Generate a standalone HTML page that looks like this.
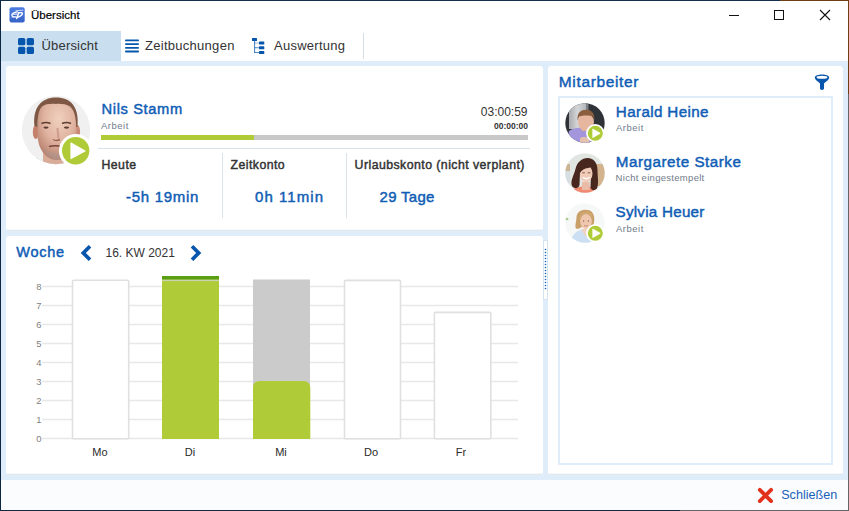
<!DOCTYPE html>
<html><head><meta charset="utf-8">
<style>
*{margin:0;padding:0;box-sizing:border-box}
html,body{width:849px;height:511px;overflow:hidden;background:#fff}
body{position:relative;font-family:"Liberation Sans",sans-serif}
.a{position:absolute}
.t{position:absolute;white-space:nowrap;line-height:1}
.blue{color:#0f5db5}
.b{font-weight:bold}
.sb{font-weight:normal;-webkit-text-stroke:0.45px currentColor}
.panel{position:absolute;background:linear-gradient(180deg,#fff calc(100% - 2px),#f6f8fa calc(100% - 2px),#f6f8fa calc(100% - 1px),#e0e7ed calc(100% - 1px));
 clip-path:polygon(2px 0,calc(100% - 2px) 0,100% 2px,100% calc(100% - 2px),calc(100% - 2px) 100%,2px 100%,0 calc(100% - 2px),0 2px)}
</style></head><body>

<!-- window border -->
<div class="a" style="left:0;top:0;width:849px;height:1px;background:linear-gradient(90deg,#13304d 0,#13304d 780px,#6f3f14 780px)"></div>
<div class="a" style="left:0;top:0;width:1px;height:511px;background:#0d2742"></div>
<div class="a" style="left:848px;top:0;width:1px;height:511px;background:linear-gradient(180deg,#6f3f14 0,#6f3f14 94px,#656565 94px,#656565 511px)"></div>
<div class="a" style="left:0;top:510px;width:849px;height:1px;background:linear-gradient(90deg,#0f2a44 0,#0f2a44 680px,#656565 680px)"></div>

<!-- title bar -->
<svg class="a" style="left:9px;top:7px" width="16" height="16" viewBox="9 7 16 16">
 <defs><linearGradient id="lg" x1="0" y1="0" x2="0" y2="1"><stop offset="0" stop-color="#4d7de0"/><stop offset="1" stop-color="#3562c6"/></linearGradient></defs>
 <rect x="9.5" y="7.2" width="15.2" height="15.3" rx="2" fill="url(#lg)"/>
 <g fill="none" stroke="#fff" stroke-linecap="round">
  <path d="M17.4 11.9 C14.5 12.3 12.2 13.6 11.9 15 C11.6 16.4 13.2 17 15.8 16.9" stroke-width="1.4"/>
  <path d="M13.6 14.3 L17 14" stroke-width="1.1"/>
  <path d="M16 10.7 L22.9 10.2" stroke-width="0.7"/>
  <path d="M18.7 13 L16.6 18.6" stroke-width="1.5"/>
  <path d="M18.6 12.8 C21 12.4 22.8 12.6 22.4 13.8 C22 15.2 20 16.6 17.4 17.2" stroke-width="1.4"/>
  <path d="M11.3 17.5 L15 17.3" stroke-width="0.5" opacity="0.6"/>
 </g>
</svg>
<div class="t" style="left:31px;top:10.2px;font-size:11.5px;color:#000;-webkit-text-stroke:0.2px #000">Übersicht</div>

<svg class="a" style="left:728px;top:14px" width="12" height="2"><rect x="1" y="1" width="10" height="1" fill="#111"/></svg>
<div class="a" style="left:774px;top:10px;width:10px;height:10px;border:1px solid #111"></div>
<svg class="a" style="left:819px;top:9px" width="12" height="12" viewBox="0 0 12 12"><path d="M1 1 L11 11 M11 1 L1 11" stroke="#111" stroke-width="1.1"/></svg>

<!-- tab bar -->
<div class="a" style="left:1px;top:31px;width:120px;height:30px;background:#c9deee"></div>
<svg class="a" style="left:18px;top:38px" width="16" height="16" viewBox="0 0 16 16">
 <rect x="0" y="0" width="7.3" height="7.3" rx="1.6" fill="#0656ad"/>
 <rect x="8.7" y="0" width="7.3" height="7.3" rx="1.6" fill="#0656ad"/>
 <rect x="0" y="8.7" width="7.3" height="7.3" rx="1.6" fill="#0656ad"/>
 <rect x="8.7" y="8.7" width="7.3" height="7.3" rx="1.6" fill="#0656ad"/>
</svg>
<div class="t" style="left:41.5px;top:38.6px;font-size:13px;color:#333;letter-spacing:0.18px">Übersicht</div>

<svg class="a" style="left:124.6px;top:39px" width="14" height="14" viewBox="0 0 14 14">
 <rect x="0" y="0.5" width="14" height="1.8" rx="0.9" fill="#0656ad"/>
 <rect x="0" y="4.2" width="14" height="1.8" rx="0.9" fill="#0656ad"/>
 <rect x="0" y="7.9" width="14" height="1.8" rx="0.9" fill="#0656ad"/>
 <rect x="0" y="11.6" width="14" height="1.8" rx="0.9" fill="#0656ad"/>
</svg>
<div class="t" style="left:145px;top:38.6px;font-size:13px;color:#333;letter-spacing:0.28px">Zeitbuchungen</div>

<svg class="a" style="left:248px;top:35px" width="20" height="22" viewBox="0 0 20 22">
 <g fill="#0656ad">
 <rect x="4" y="3" width="5" height="2.9" rx="0.5"/>
 <rect x="6.1" y="5.5" width="1" height="12.3" opacity="0.75"/>
 <rect x="6.1" y="7.6" width="5" height="0.9" opacity="0.45"/>
 <rect x="6.1" y="12.3" width="5" height="0.9" opacity="0.75"/>
 <rect x="6.1" y="17" width="5" height="0.9" opacity="0.75"/>
 <rect x="11" y="6.5" width="5.3" height="3" rx="0.6"/>
 <rect x="11" y="11.3" width="5.3" height="3" rx="0.6"/>
 <rect x="11" y="16.1" width="5.3" height="2.9" rx="0.6"/>
 </g>
</svg>
<div class="t" style="left:274px;top:38.6px;font-size:13px;color:#333;letter-spacing:0.26px">Auswertung</div>
<div class="a" style="left:363px;top:33px;width:1px;height:26px;background:#d5dde5"></div>

<!-- content background -->
<div class="a" style="left:1px;top:61px;width:847px;height:419px;background:#dfecf9"></div>
<div class="a" style="left:1px;top:480px;width:847px;height:30px;background:#fafcfe"></div>

<!-- panel 1 -->
<div class="panel" style="left:6px;top:66px;width:537px;height:165px"></div>
<!-- panel 2 -->
<div class="panel" style="left:6px;top:236px;width:537px;height:239px"></div>
<!-- panel 3 -->
<div class="panel" style="left:548px;top:66px;width:295px;height:409px"></div>

<!-- splitter -->
<div class="a" style="left:543px;top:240px;width:5px;height:60px;background:#fff;border:1px solid #d5e3f0"></div>
<svg class="a" style="left:544px;top:248px" width="3" height="42">
 <g fill="#1a62b8">
 <circle cx="1.5" cy="1.5" r="0.8"/><circle cx="1.5" cy="4.5" r="0.8"/><circle cx="1.5" cy="7.5" r="0.8"/><circle cx="1.5" cy="10.5" r="0.8"/>
 <circle cx="1.5" cy="13.5" r="0.8"/><circle cx="1.5" cy="16.5" r="0.8"/><circle cx="1.5" cy="19.5" r="0.8"/><circle cx="1.5" cy="22.5" r="0.8"/>
 <circle cx="1.5" cy="25.5" r="0.8"/><circle cx="1.5" cy="28.5" r="0.8"/><circle cx="1.5" cy="31.5" r="0.8"/><circle cx="1.5" cy="34.5" r="0.8"/>
 <circle cx="1.5" cy="37.5" r="0.8"/><circle cx="1.5" cy="40.5" r="0.8"/>
 </g>
</svg>

<!-- ===== Employee card ===== -->
<svg class="a" style="left:20px;top:94px" width="74" height="74" viewBox="20 94 74 74">
 <defs>
  <clipPath id="c1"><circle cx="56" cy="130" r="34.2"/></clipPath>
  <radialGradient id="skin1" cx="0.55" cy="0.3" r="0.7"><stop offset="0" stop-color="#f0d0bf"/><stop offset="0.55" stop-color="#e0b4a0"/><stop offset="1" stop-color="#b98270"/></radialGradient>
 </defs>
 <g clip-path="url(#c1)">
  <rect x="20" y="94" width="74" height="74" fill="#f0f0f0"/>
  <path d="M26 168 C30 161 38 159 44 158 L68 158 C74 159 82 161 86 168 Z" fill="#e8eef2"/>
  <path d="M32 166 L37 158 L41 166 Z" fill="#4a9ac8"/>
  <path d="M43 148 L43 168 L70 168 L70 148 Z" fill="#d8ac98"/>
  <ellipse cx="35.8" cy="132" rx="3" ry="7" fill="#c4806a"/>
  <ellipse cx="77.3" cy="132" rx="2.8" ry="7" fill="#c88a74"/>
  <path d="M37.5 116 C37.5 105 45 101.5 57 101.5 C69 101.5 76.5 105 76.5 117 L76.5 134 C76.5 149 68 160 57 160 C46 160 37.5 149 37.5 134 Z" fill="url(#skin1)"/>
  <path d="M43 148 C47 156 52 160 57 160 C62 160 67 156 70 148 C66 152 62 153 57 153 C52 153 47 152 43 148 Z" fill="#a89890" opacity="0.5"/>
  <path d="M34.5 126 C32.5 108 41 97.5 56 97.5 C71 97.5 79.5 107 77.5 127 L76.2 127 C76 116 74 110 70 106.5 C66 104 60 103.5 56 104 C51 103.5 45 104 42 106.5 C38.5 110 37.5 117 37.6 127 Z" fill="#7e5844"/>
  <path d="M41.5 123.5 Q46 121.5 50.5 123.5 M62 123.5 Q66.5 121.5 71 123.5" stroke="#5e3e30" stroke-width="1.6" fill="none"/>
  <ellipse cx="46" cy="127.6" rx="2.6" ry="1.1" fill="#5a3e34"/>
  <ellipse cx="66.5" cy="127.6" rx="2.6" ry="1.1" fill="#5a3e34"/>
  <path d="M57.5 128 L58.5 138.5" stroke="#c89080" stroke-width="2.2" fill="none" opacity="0.7"/>
  <path d="M53 139.5 Q56 141.5 60 139.5" stroke="#9a6050" stroke-width="1.4" fill="none"/>
  <path d="M49 146.5 Q55 145 62 146.5" stroke="#7a4438" stroke-width="1.7" fill="none"/>
 </g>
</svg>
<svg class="a" style="left:58px;top:134px" width="35" height="35" viewBox="58 134 35 35">
 <circle cx="75.7" cy="150.8" r="16.8" fill="#fff"/>
 <circle cx="75.7" cy="150.8" r="13.7" fill="#afcb37"/>
 <path d="M71 143 L85 151 L71 158.5 Z" fill="#fff" stroke="#fff" stroke-width="1.2" stroke-linejoin="round"/>
</svg>

<div class="t sb blue" style="left:101.6px;top:101.9px;font-size:14.7px;letter-spacing:0.61px">Nils Stamm</div>
<div class="t" style="left:101px;top:120.6px;font-size:9.5px;color:#717b8a;letter-spacing:0.5px">Arbeit</div>
<div class="t" style="right:321.5px;top:106.2px;font-size:12px;color:#333">03:00:59</div>
<div class="t b" style="right:321px;top:121.6px;font-size:8.5px;color:#333">00:00:00</div>

<div class="a" style="left:101px;top:135px;width:153px;height:5px;background:#afcb37"></div>
<div class="a" style="left:254px;top:135px;width:274px;height:5px;background:#c8c8c8"></div>
<div class="a" style="left:98px;top:148px;width:432px;height:1px;background:#d8e3eb"></div>
<div class="a" style="left:222px;top:153px;width:1px;height:65px;background:#d8e3eb"></div>
<div class="a" style="left:346px;top:153px;width:1px;height:65px;background:#d8e3eb"></div>

<div class="t sb" style="left:101.5px;top:159.2px;font-size:12.3px;color:#333;letter-spacing:0.45px">Heute</div>
<div class="t sb" style="left:230.6px;top:159.2px;font-size:12.3px;color:#333;letter-spacing:0.43px">Zeitkonto</div>
<div class="t sb" style="left:354.6px;top:159.2px;font-size:12.3px;color:#333;letter-spacing:0.45px">Urlaubskonto (nicht verplant)</div>

<div class="t sb blue" style="left:126px;top:189px;font-size:15px;letter-spacing:0.7px">-5h 19min</div>
<div class="t sb blue" style="left:255px;top:189px;font-size:15px;letter-spacing:1.06px">0h 11min</div>
<div class="t sb blue" style="left:379.5px;top:189px;font-size:15px;letter-spacing:0.3px">29 Tage</div>

<!-- ===== Woche ===== -->
<div class="t sb blue" style="left:16.3px;top:244.9px;font-size:14.5px;letter-spacing:0.72px">Woche</div>
<svg class="a" style="left:80px;top:245px" width="12" height="16" viewBox="0 0 12 16"><path d="M10 1.3 L3.3 8 L10 14.7" stroke="#0656ad" stroke-width="3.7" fill="none" stroke-linecap="butt" stroke-linejoin="miter"/></svg>
<div class="t" style="left:105.5px;top:247px;font-size:12px;color:#333">16. KW 2021</div>
<svg class="a" style="left:190px;top:245px" width="12" height="16" viewBox="0 0 12 16"><path d="M2 1.3 L8.7 8 L2 14.7" stroke="#0656ad" stroke-width="3.7" fill="none" stroke-linecap="butt" stroke-linejoin="miter"/></svg>

<!-- chart -->
<svg class="a" style="left:0;top:0" width="849" height="511">
 <g stroke="#e8e8e8" stroke-width="1.5">
  <line x1="42" y1="286.45" x2="518" y2="286.45"/>
  <line x1="42" y1="305.45" x2="518" y2="305.45"/>
  <line x1="42" y1="324.45" x2="518" y2="324.45"/>
  <line x1="42" y1="343.45" x2="518" y2="343.45"/>
  <line x1="42" y1="362.45" x2="518" y2="362.45"/>
  <line x1="42" y1="381.45" x2="518" y2="381.45"/>
  <line x1="42" y1="400.45" x2="518" y2="400.45"/>
  <line x1="42" y1="419.45" x2="518" y2="419.45"/>
  <line x1="42" y1="438.45" x2="518" y2="438.45"/>
 </g>
 <!-- Mo -->
 <rect x="72.5" y="280.2" width="56.2" height="158.5" rx="1" fill="#fff" stroke="#e0e0e0" stroke-width="1.6"/>
 <!-- Di -->
 <rect x="162" y="276" width="57" height="163" fill="#afcb37"/>
 <rect x="162" y="276" width="57" height="3.7" fill="#5a9e12"/>
 <rect x="162" y="279.7" width="57" height="1.4" fill="#c9d4b0"/>
 <!-- Mi -->
 <rect x="253" y="279.5" width="57" height="159.5" fill="#cbcbcb"/>
 <path d="M253 439 V388 Q253 381 260 381 H303.3 Q310.3 381 310.3 388 V439 Z" fill="#afcb37"/>
 <!-- Do -->
 <rect x="344.5" y="280.4" width="56" height="158.3" rx="1" fill="#fff" stroke="#e0e0e0" stroke-width="1.6"/>
 <!-- Fr -->
 <rect x="434.4" y="312.4" width="56.4" height="126.3" rx="1" fill="#fff" stroke="#e0e0e0" stroke-width="1.6"/>
</svg>
<div class="t" style="left:30px;top:281.9px;width:11.5px;text-align:right;font-size:9.4px;color:#808080">8</div>
<div class="t" style="left:30px;top:300.9px;width:11.5px;text-align:right;font-size:9.4px;color:#808080">7</div>
<div class="t" style="left:30px;top:319.9px;width:11.5px;text-align:right;font-size:9.4px;color:#808080">6</div>
<div class="t" style="left:30px;top:338.9px;width:11.5px;text-align:right;font-size:9.4px;color:#808080">5</div>
<div class="t" style="left:30px;top:357.9px;width:11.5px;text-align:right;font-size:9.4px;color:#808080">4</div>
<div class="t" style="left:30px;top:376.9px;width:11.5px;text-align:right;font-size:9.4px;color:#808080">3</div>
<div class="t" style="left:30px;top:395.9px;width:11.5px;text-align:right;font-size:9.4px;color:#808080">2</div>
<div class="t" style="left:30px;top:414.9px;width:11.5px;text-align:right;font-size:9.4px;color:#808080">1</div>
<div class="t" style="left:30px;top:433.9px;width:11.5px;text-align:right;font-size:9.4px;color:#808080">0</div>

<div class="t" style="left:70px;top:446.9px;width:60px;text-align:center;font-size:11px;color:#2a2a2a">Mo</div>
<div class="t" style="left:160px;top:446.9px;width:60px;text-align:center;font-size:11px;color:#2a2a2a">Di</div>
<div class="t" style="left:251px;top:446.9px;width:60px;text-align:center;font-size:11px;color:#2a2a2a">Mi</div>
<div class="t" style="left:341px;top:446.9px;width:60px;text-align:center;font-size:11px;color:#2a2a2a">Do</div>
<div class="t" style="left:431px;top:446.9px;width:60px;text-align:center;font-size:11px;color:#2a2a2a">Fr</div>

<!-- ===== Mitarbeiter ===== -->
<div class="t sb blue" style="left:558.8px;top:73.7px;font-size:15.5px;letter-spacing:0.64px">Mitarbeiter</div>
<svg class="a" style="left:814px;top:73px" width="16" height="18" viewBox="0 0 16 18">
 <path d="M0.8 4.6 C0.8 0.6 15.2 0.6 15.2 4.6 C15.2 6.6 12.5 8.3 10 10.6 L10 15.6 Q10 17 8 17 Q6 17 6 15.6 L6 10.6 C3.5 8.3 0.8 6.6 0.8 4.6 Z" fill="#0656ad"/>
 <ellipse cx="8" cy="4.2" rx="5.4" ry="1.5" fill="#fff"/>
</svg>
<div class="a" style="left:558px;top:96px;width:275px;height:369px;border:2px solid #dfecf9"></div>

<!-- Harald -->
<svg class="a" style="left:565px;top:103px" width="40" height="40" viewBox="0 0 40 40">
 <defs><clipPath id="c2"><circle cx="20" cy="20" r="19.7"/></clipPath>
 <linearGradient id="hg" x1="0" y1="0" x2="1" y2="0"><stop offset="0" stop-color="#a8abae"/><stop offset="0.5" stop-color="#d4d6d7"/><stop offset="1" stop-color="#b4b7b9"/></linearGradient></defs>
 <g clip-path="url(#c2)">
  <rect width="40" height="40" fill="#2f3338"/>
  <rect x="4" y="0" width="17" height="26" fill="url(#hg)"/>
  <rect x="21" y="0" width="2.5" height="26" fill="#7d8186"/>
  <path d="M2 40 L4 28 C8 25 13 24.5 18 25 L25 27 L26 40 Z" fill="#a496dc"/>
  <circle cx="18" cy="19" r="0.8" fill="#7a5a50"/><circle cx="24" cy="19" r="0.8" fill="#7a5a50"/>
  <path d="M18.5 23.5 Q21 25 23.5 23.5" stroke="#b07060" stroke-width="0.9" fill="none"/>
  <rect x="16.5" y="23" width="8" height="5" fill="#d9a98f"/>
  <ellipse cx="21" cy="19" rx="8" ry="8.8" fill="#e6b69e"/>
  <path d="M12.6 17.5 C12 10 15.5 6.8 21 6.8 C26.5 6.8 30 10 29.3 17.5 L28 13.5 C25.5 12 17 12 14 13.5 Z" fill="#8a5e3e"/>
  <path d="M15 35 C17 33.5 21 33.5 24 35 L24 40 L15 40 Z" fill="#e4c0ae"/>
 </g>
</svg>
<svg class="a" style="left:585px;top:123px" width="21" height="21" viewBox="0 0 21 21">
 <circle cx="10.3" cy="10.3" r="9.2" fill="#fff"/>
 <circle cx="10.3" cy="10.3" r="7.5" fill="#afcb37"/>
 <path d="M7.8 6 L15.2 10.3 L7.8 14.6 Z" fill="#fff" stroke="#fff" stroke-width="0.8" stroke-linejoin="round"/>
</svg>
<div class="t sb blue" style="left:615.8px;top:103.7px;font-size:15.2px;letter-spacing:0.37px">Harald Heine</div>
<div class="t" style="left:616px;top:123.3px;font-size:9.5px;color:#717b8a;letter-spacing:0.5px">Arbeit</div>

<!-- Margarete -->
<svg class="a" style="left:565px;top:153px" width="40" height="40" viewBox="0 0 40 40">
 <defs><clipPath id="c3"><circle cx="20" cy="20" r="19.7"/></clipPath></defs>
 <g clip-path="url(#c3)">
  <rect width="40" height="40" fill="#e2e6e2"/>
  <rect x="29" y="11" width="11" height="22" fill="#d4b48e"/>
  <rect x="0" y="11" width="5" height="7" fill="#ccb492"/>
  <rect x="0" y="18" width="5" height="12" fill="#d6dee2"/>
  <path d="M5 40 C8 35 13 33.5 20 33.5 C27 33.5 32 35 35 40 Z" fill="#f08a72"/>
  <path d="M17 29 L17 37 L24.5 37 L24.5 29 Z" fill="#eabca8"/>
  <path d="M7 33 C5 28 9 22 10.5 16 C12 9 17 5 22.5 5 C29 5 32.5 10 32.5 17 C32.5 24 34 30 32 35.5 C30 38.5 25 37.5 25.5 33 L26 22 L15 20 L14.5 32 C13.5 36 9 36 7 33 Z" fill="#47271e"/>
  <ellipse cx="21.2" cy="20.5" rx="6.3" ry="8.6" fill="#f0cbb8"/>
  <path d="M14.2 18 C14.5 11 22 7.5 28.5 12 C27 15 24 14.5 20.5 15.5 C17.5 16.5 15.5 18.5 14.5 21 Z" fill="#47271e"/>
  <path d="M17.8 24.3 Q21.2 27 24.6 24.3" stroke="#fff" stroke-width="1.4" fill="none"/>
  <path d="M17.3 19.8 L19.8 19.8 M22.8 19.8 L25.3 19.8" stroke="#7a4a3a" stroke-width="0.9"/>
 </g>
</svg>
<div class="t sb blue" style="left:615.8px;top:153.7px;font-size:15.2px;letter-spacing:0.52px">Margarete Starke</div>
<div class="t" style="left:615.6px;top:173px;font-size:9.5px;color:#717b8a;letter-spacing:0.29px">Nicht eingestempelt</div>

<!-- Sylvia -->
<svg class="a" style="left:565px;top:203px" width="40" height="40" viewBox="0 0 40 40">
 <defs><clipPath id="c4"><circle cx="20" cy="20" r="19.7"/></clipPath></defs>
 <g clip-path="url(#c4)">
  <rect width="40" height="40" fill="#f6f8f7"/>
  <ellipse cx="1.5" cy="16" rx="2" ry="1.2" fill="#a8c890"/>
  <path d="M5 40 C7 31 12 27 19 26.5 C26 27 31 30 34 40 Z" fill="#cddff2"/>
  <path d="M16 26 L21 34 L25 26 Z" fill="#f0d2c0"/>
  <path d="M11 25.5 C9.5 23 11.5 18 11.5 14 C12 9 15.5 6.8 20.8 6.8 C26 6.8 29.3 10 29.3 16 C29.3 20 28.5 23 27 25 L24 25 L17 24 C15 25 13 26.5 11 25.5 Z" fill="#c9a06a"/>
  <ellipse cx="21" cy="18.5" rx="5.8" ry="7.4" fill="#efc6ae"/>
  <path d="M15 16 C15.5 11 24 9 27 14 L27 11.5 C25 8.5 17 8.5 15 12.5 Z" fill="#d0aa72"/>
  <circle cx="18.6" cy="18" r="0.7" fill="#8a6a5a"/><circle cx="23.4" cy="18" r="0.7" fill="#8a6a5a"/>
  <path d="M19 22.5 Q21 23.8 23 22.5" stroke="#c08070" stroke-width="0.8" fill="none"/>
 </g>
</svg>
<svg class="a" style="left:585px;top:223px" width="21" height="21" viewBox="0 0 21 21">
 <circle cx="10.3" cy="10.3" r="9.2" fill="#fff"/>
 <circle cx="10.3" cy="10.3" r="7.5" fill="#afcb37"/>
 <path d="M7.8 6 L15.2 10.3 L7.8 14.6 Z" fill="#fff" stroke="#fff" stroke-width="0.8" stroke-linejoin="round"/>
</svg>
<div class="t sb blue" style="left:615.5px;top:203.7px;font-size:15.2px;letter-spacing:0.25px">Sylvia Heuer</div>
<div class="t" style="left:616px;top:223.8px;font-size:9.5px;color:#717b8a;letter-spacing:0.5px">Arbeit</div>

<!-- footer -->
<svg class="a" style="left:757px;top:487px" width="17" height="17" viewBox="0 0 17 17">
 <path d="M2.8 2.8 L14.1 14.1 M14.1 2.8 L2.8 14.1" stroke="#e2321c" stroke-width="3.8" stroke-linecap="round"/>
</svg>
<div class="t blue" style="left:781.2px;top:488.6px;font-size:12.6px;color:#1a5fb8">Schließen</div>

</body></html>
